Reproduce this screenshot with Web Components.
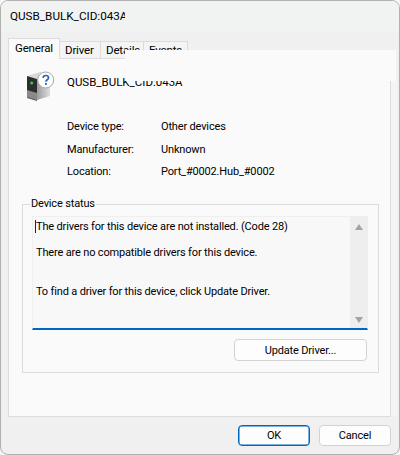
<!DOCTYPE html>
<html>
<head>
<meta charset="utf-8">
<style>
  html, body { margin: 0; padding: 0; background: #f6f6f6; }
  body { width: 400px; height: 455px; overflow: hidden; font: 11px Roboto, "Liberation Sans", sans-serif; letter-spacing: -.16px; color: #000; }
</style>
</head>
<body>
<props-window title="QUSB_BULK_CID:043A">
  <device-header name="QUSB_BULK_CID:043A"></device-header>
  <prop-row label="Device type:" value="Other devices"></prop-row>
  <prop-row label="Manufacturer:" value="Unknown"></prop-row>
  <prop-row label="Location:" value="Port_#0002.Hub_#0002"></prop-row>
  <status-group legend="Device status">
    <p>The drivers for this device are not installed. (Code 28)</p>
    <p>There are no compatible drivers for this device.</p>
    <p>To find a driver for this device, click Update Driver.</p>
  </status-group>
  <win-button slot="footer" primary style="width:72px">OK</win-button>
  <win-button slot="footer" style="width:72px">Cancel</win-button>
</props-window>

<script>
// Plain push button, the primary one gets the blue outline
class WinButton extends HTMLElement {
  connectedCallback() {
    this.attachShadow({ mode: 'open' }).innerHTML = `
      <style>
        :host {
          display: flex; align-items: center; justify-content: center;
          box-sizing: border-box; height: 21px;
          background: #fdfdfd; border: 1px solid #d2d2d2; border-radius: 4px;
        }
        :host([primary]) { border-color: #0067c0; box-shadow: inset 0 0 0 0.5px #0067c0; }
      </style>
      <slot></slot>`;
  }
}

class PropsTabs extends HTMLElement {
  connectedCallback() {
    const tabs = [['General', 52], ['Driver', 42], ['Details', 44], ['Events', 45]];
    this.attachShadow({ mode: 'open' }).innerHTML = `
      <style>
        :host { display: flex; align-items: flex-end; height: 20px; padding-left: 7px; }
        .tab {
          box-sizing: border-box; height: 17px; padding: 1px 0 0 5px;
          background: #f4f4f4; border: 1px solid #dcdcdc; border-bottom: 0; margin-right: -1px;
          line-height: 14px; font-size: 11.500px;
        }
        .on {
          height: 21px; padding: 2px 0 0 6px; margin-bottom: -1px;
          background: #fafafa; position: relative; z-index: 1;
        }
      </style>
      ${tabs.map(([t, w], i) => `<div class="tab ${i ? '' : 'on'}" style="width:${w}px">${t}</div>`).join('')}`;
  }
}

class DeviceHeader extends HTMLElement {
  connectedCallback() {
    this.attachShadow({ mode: 'open' }).innerHTML = `
      <style>
        :host { display: flex; align-items: flex-start; height: 60px; padding: 12px 0 0 17px; box-sizing: border-box; }
        svg { display: block; width: 29px; height: 31px; flex: none; }
        span { margin: 3px 0 0 12px; font-size: 11.500px; line-height: 16px; letter-spacing: 0; }
      </style>
      <svg viewBox="0 0 29 31">
        <defs>
          <linearGradient id="side" x1="0" y1="0" x2="1" y2="0">
            <stop offset="0" stop-color="#9c9c9c"/><stop offset="1" stop-color="#dedede"/>
          </linearGradient>
        </defs>
        <path d="M1 5 14 1 24 4 11 8Z" fill="#d8d8d8"/>
        <path d="M11 8 24 4 24 25 11 29Z" fill="url(#side)"/>
        <path d="M1 5 11 8 11 29 1 26Z" fill="#2e2e2e"/>
        <path d="M1 19 11 22 11 29 1 26Z" fill="#8a8a8a"/>
        <path d="M1 26 11 29 11 30 1 27Z" fill="#555"/>
        <circle cx="5.700" cy="12" r="1.500" fill="#37d24a"/>
        <circle cx="19.700" cy="9" r="8" fill="#fdfdfd" stroke="#a8a8a8"/>
        <path d="M17 6.800c.2-1.500 1.300-2.300 2.800-2.300 1.600 0 2.700.9 2.700 2.200 0 2.100-2.600 2-2.600 4.100" fill="none" stroke="#2566b8" stroke-width="1.700"/>
        <rect x="19" y="12" width="1.800" height="1.900" fill="#2566b8"/>
      </svg>
      <span>${this.getAttribute('name')}</span>`;
  }
}

class PropRow extends HTMLElement {
  connectedCallback() {
    this.attachShadow({ mode: 'open' }).innerHTML = `
      <style>
        :host { display: grid; grid-template-columns: 94px auto; height: 22.500px; padding-left: 58px; line-height: 16px; }
      </style>
      <div>${this.getAttribute('label')}</div>
      <div>${this.getAttribute('value')}</div>`;
  }
}

// Group box with the read-only status text, its scroll bar and the update button
class StatusGroup extends HTMLElement {
  connectedCallback() {
    this.attachShadow({ mode: 'open' }).innerHTML = `
      <style>
        :host {
          display: block; position: relative; box-sizing: border-box;
          margin: 17.500px 11px 0 13px; height: 169px; padding: 11px 10px 0 9px;
          border: 1px solid #dcdcdc;
        }
        .legend {
          position: absolute; left: 7px; top: -9px; padding: 0 1px;
          background: #fafafa; line-height: 16px;
        }
        .box {
          display: flex; height: 114px; box-sizing: border-box;
          background: #f8f8f8; border: 1px solid #efefef; border-bottom: 2px solid #0067c0;
        }
        .text { flex: 1; padding: 2px 0 0 3px; position: relative; }
        .caret { position: absolute; left: 2px; top: 3px; width: 1px; height: 13px; background: #222; }
        ::slotted(p) { margin: 0 0 10px; line-height: 16px; }
        ::slotted(p:nth-child(2)) { margin-bottom: 23px; }
        .bar {
          width: 17px; background: #eee; display: flex; flex-direction: column;
          justify-content: space-between; align-items: center; padding: 7px 0 5px;
          box-sizing: border-box;
        }
        .up, .down { width: 0; height: 0; border-left: 4px solid transparent; border-right: 4px solid transparent; }
        .up { border-bottom: 6px solid #a3a3a3; }
        .down { border-top: 6px solid #a3a3a3; }
        .act { display: flex; justify-content: flex-end; margin: 9px 1px 0 0; }
      </style>
      <div class="legend">${this.getAttribute('legend')}</div>
      <div class="box">
        <div class="text"><span class="caret"></span><slot></slot></div>
        <div class="bar"><i class="up"></i><i class="down"></i></div>
      </div>
      <div class="act"><win-button style="width:133px;height:22px">Update Driver...</win-button></div>`;
  }
}

class PropsWindow extends HTMLElement {
  connectedCallback() {
    this.attachShadow({ mode: 'open' }).innerHTML = `
      <style>
        :host {
          display: flex; flex-direction: column; position: relative; box-sizing: border-box;
          width: 400px; height: 455px; overflow: hidden;
          background: #f0f0f0; border: 1px solid #b0b0b0; border-radius: 8px;
        }
        .title { height: 30px; flex: none; background: #f1f3f2; padding-left: 9px; font-size: 11.700px; letter-spacing: 0; line-height: 30px; }
        .title span { display: block; width: 115px; overflow: hidden; white-space: nowrap; }
        .tabs { height: 7px; flex: none; }
        .panel {
          margin: 0 8px 0 7px; height: 359px; flex: none; box-sizing: border-box;
          background: #fafafa; border: 1px solid #dcdcdc;
        }
        .footer { display: flex; justify-content: flex-end; gap: 9px; padding: 8px 8px 0 0; }
        /* the stale repaint that covers the tops of the tabs in the capture */
        .patch { position: absolute; left: 124px; right: 3px; top: 49px; height: 31px; background: #fafafa; }
        .band { position: absolute; left: 390px; width: 6px; top: 80px; height: 335px; background: #f4f4f4; }
        .strip { position: absolute; left: -1px; top: 84px; width: 1px; height: 64px;
          background: repeating-linear-gradient(#7d3a6a 0 10px, #b0b0b0 10px 18px); }
        .strip2 { position: absolute; left: -1px; top: 159px; width: 1px; height: 6px; background: #6a5a8a; }
      </style>
      <div class="title"><span>${this.getAttribute('title')}</span></div>
      <div class="tabs"></div>
      <props-tabs></props-tabs>
      <div class="panel"><slot></slot></div>
      <div class="footer"><slot name="footer"></slot></div>
      <div class="patch"></div>
      <div class="band"></div>
      <div class="strip"></div>
      <div class="strip2"></div>`;
  }
}

customElements.define('win-button', WinButton);
customElements.define('props-tabs', PropsTabs);
customElements.define('device-header', DeviceHeader);
customElements.define('prop-row', PropRow);
customElements.define('status-group', StatusGroup);
customElements.define('props-window', PropsWindow);
</script>
</body>
</html>
